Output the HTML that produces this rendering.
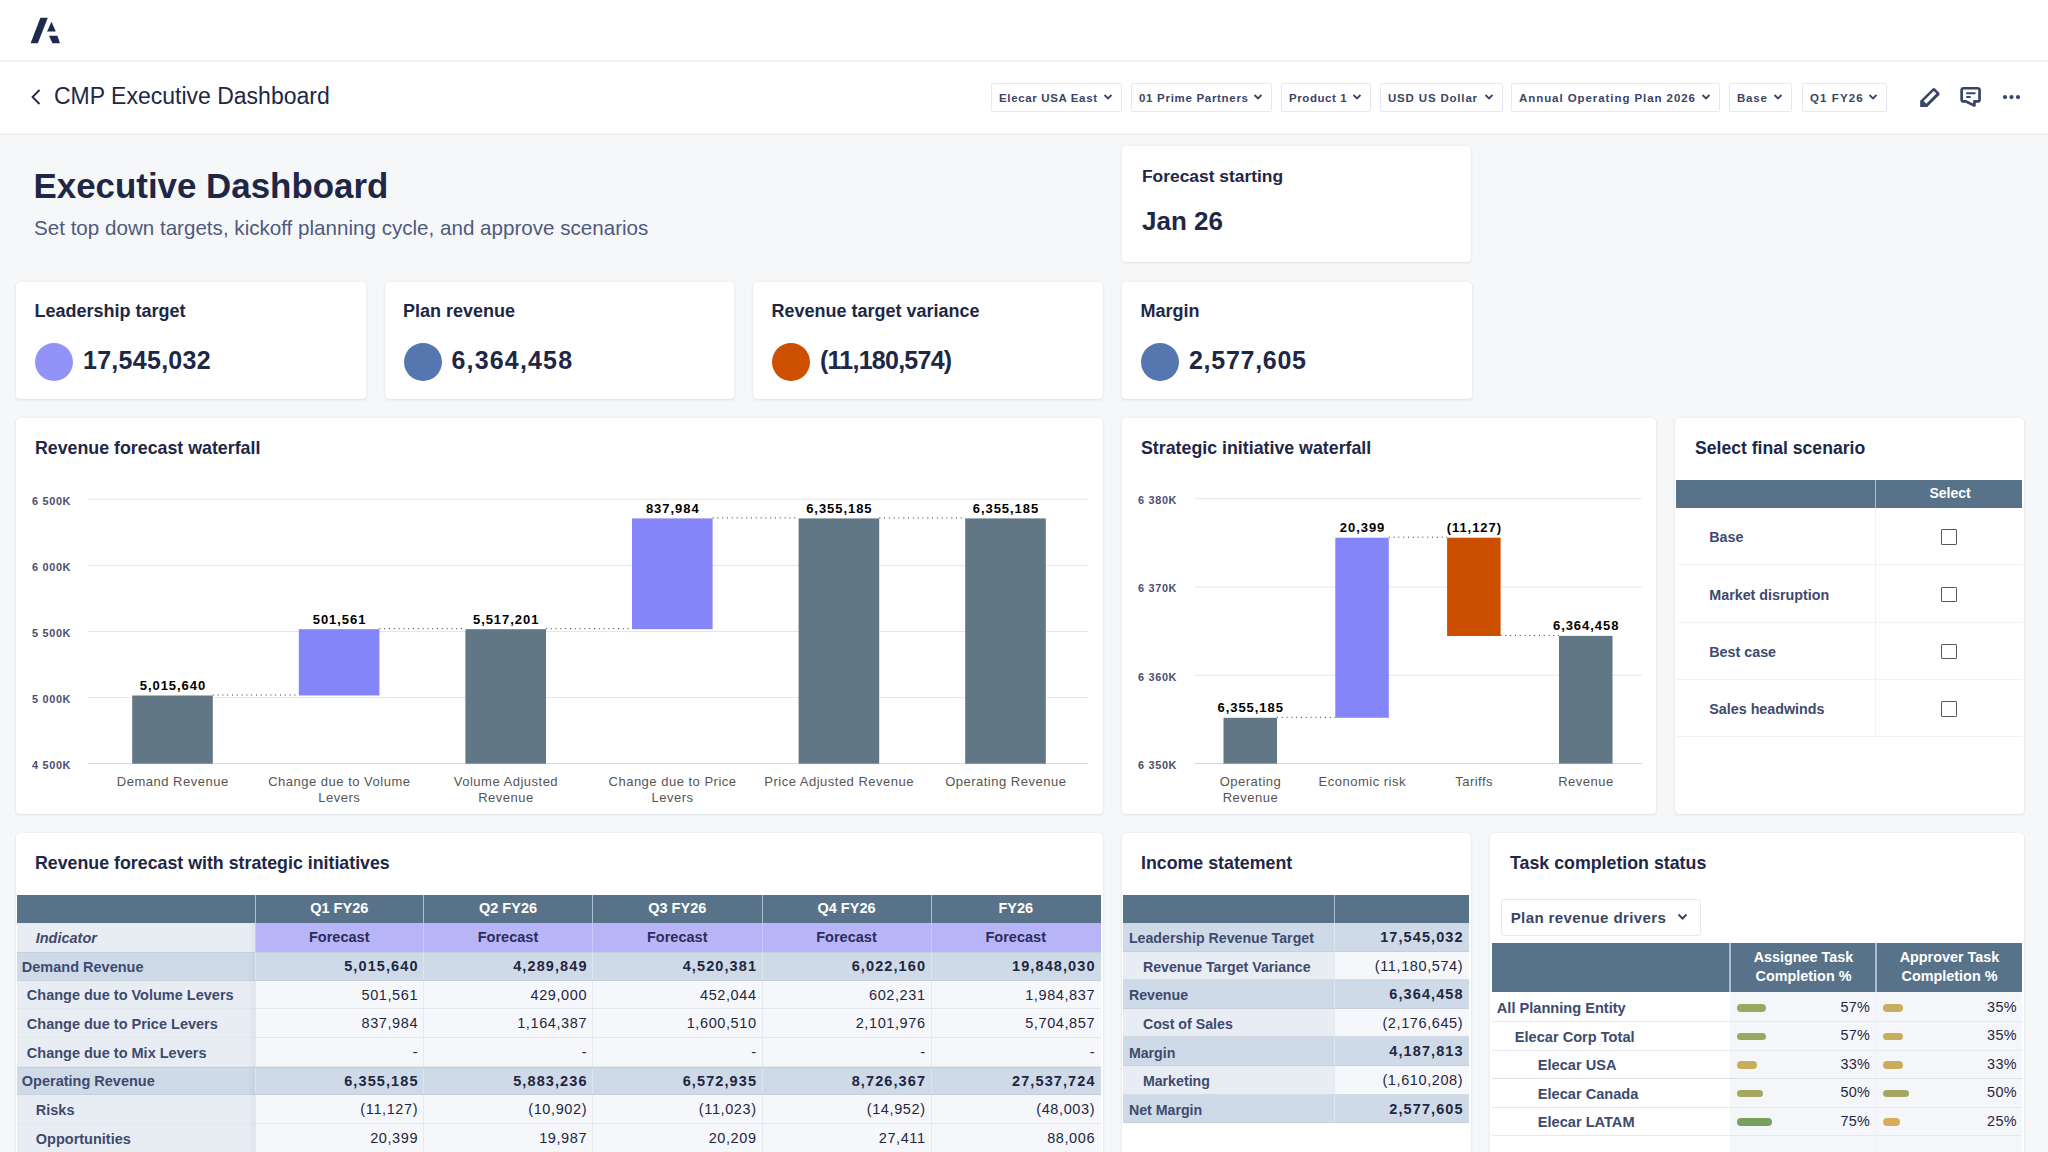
<!DOCTYPE html><html><head><meta charset="utf-8"><style>html,body{margin:0;padding:0;}body{width:2048px;height:1152px;overflow:hidden;position:relative;background:#f6f7f9;font-family:"Liberation Sans",sans-serif;}</style></head><body><div style="position:absolute;left:0px;top:0px;width:2048px;height:60px;background:#ffffff;"></div><div style="position:absolute;left:0px;top:60px;width:2048px;height:2px;background:#f0f1f4;"></div><div style="position:absolute;left:0px;top:62px;width:2048px;height:71px;background:#ffffff;"></div><div style="position:absolute;left:0px;top:133px;width:2048px;height:2px;background:#eef0f3;"></div><svg style="position:absolute;left:0;top:0" width="80" height="60" viewBox="0 0 80 60"><polygon points="40.4,17.8 47.8,17.8 37.8,43.2 30.6,43.2" fill="#1f2a4d"/><polygon points="51.5,21.7 55.8,31.5 47.1,31.5" fill="#1f2a4d"/><polygon points="49.1,35.8 57.4,35.8 60,43.2 52.4,43.2" fill="#1f2a4d"/></svg><svg style="position:absolute;left:28px;top:86px" width="16" height="22" viewBox="0 0 16 22"><polyline points="11.5,4 4.5,11 11.5,18" fill="none" stroke="#1e2746" stroke-width="1.8"/></svg><div style="position:absolute;top:84.73px;font-size:23px;line-height:23px;font-weight:400;color:#1e2746;white-space:nowrap;left:54px;">CMP Executive Dashboard</div><div style="position:absolute;left:991px;top:83px;width:129px;height:27px;border:1px solid #e6e9f2;border-radius:2px;background:#fff"></div><div style="position:absolute;top:92.87px;font-size:11.5px;line-height:11.5px;font-weight:700;color:#3b4566;white-space:nowrap;letter-spacing:0.64px;left:999px;">Elecar USA East</div><svg style="position:absolute;left:1103px;top:93px" width="10" height="8" viewBox="0 0 10 8"><polyline points="1.5,2 5,5.5 8.5,2" fill="none" stroke="#3b4566" stroke-width="1.8"/></svg><div style="position:absolute;left:1131px;top:83px;width:139px;height:27px;border:1px solid #e6e9f2;border-radius:2px;background:#fff"></div><div style="position:absolute;top:92.87px;font-size:11.5px;line-height:11.5px;font-weight:700;color:#3b4566;white-space:nowrap;letter-spacing:0.7px;left:1139px;">01 Prime Partners</div><svg style="position:absolute;left:1253px;top:93px" width="10" height="8" viewBox="0 0 10 8"><polyline points="1.5,2 5,5.5 8.5,2" fill="none" stroke="#3b4566" stroke-width="1.8"/></svg><div style="position:absolute;left:1281px;top:83px;width:88px;height:27px;border:1px solid #e6e9f2;border-radius:2px;background:#fff"></div><div style="position:absolute;top:92.87px;font-size:11.5px;line-height:11.5px;font-weight:700;color:#3b4566;white-space:nowrap;letter-spacing:0.58px;left:1289px;">Product 1</div><svg style="position:absolute;left:1352px;top:93px" width="10" height="8" viewBox="0 0 10 8"><polyline points="1.5,2 5,5.5 8.5,2" fill="none" stroke="#3b4566" stroke-width="1.8"/></svg><div style="position:absolute;left:1380px;top:83px;width:121px;height:27px;border:1px solid #e6e9f2;border-radius:2px;background:#fff"></div><div style="position:absolute;top:92.87px;font-size:11.5px;line-height:11.5px;font-weight:700;color:#3b4566;white-space:nowrap;letter-spacing:0.82px;left:1388px;">USD US Dollar</div><svg style="position:absolute;left:1484px;top:93px" width="10" height="8" viewBox="0 0 10 8"><polyline points="1.5,2 5,5.5 8.5,2" fill="none" stroke="#3b4566" stroke-width="1.8"/></svg><div style="position:absolute;left:1511px;top:83px;width:207px;height:27px;border:1px solid #e6e9f2;border-radius:2px;background:#fff"></div><div style="position:absolute;top:92.87px;font-size:11.5px;line-height:11.5px;font-weight:700;color:#3b4566;white-space:nowrap;letter-spacing:0.93px;left:1519px;">Annual Operating Plan 2026</div><svg style="position:absolute;left:1701px;top:93px" width="10" height="8" viewBox="0 0 10 8"><polyline points="1.5,2 5,5.5 8.5,2" fill="none" stroke="#3b4566" stroke-width="1.8"/></svg><div style="position:absolute;left:1729px;top:83px;width:61px;height:27px;border:1px solid #e6e9f2;border-radius:2px;background:#fff"></div><div style="position:absolute;top:92.87px;font-size:11.5px;line-height:11.5px;font-weight:700;color:#3b4566;white-space:nowrap;letter-spacing:0.8px;left:1737px;">Base</div><svg style="position:absolute;left:1773px;top:93px" width="10" height="8" viewBox="0 0 10 8"><polyline points="1.5,2 5,5.5 8.5,2" fill="none" stroke="#3b4566" stroke-width="1.8"/></svg><div style="position:absolute;left:1802px;top:83px;width:83px;height:27px;border:1px solid #e6e9f2;border-radius:2px;background:#fff"></div><div style="position:absolute;top:92.87px;font-size:11.5px;line-height:11.5px;font-weight:700;color:#3b4566;white-space:nowrap;letter-spacing:1.1px;left:1810px;">Q1 FY26</div><svg style="position:absolute;left:1868px;top:93px" width="10" height="8" viewBox="0 0 10 8"><polyline points="1.5,2 5,5.5 8.5,2" fill="none" stroke="#3b4566" stroke-width="1.8"/></svg><svg style="position:absolute;left:1915px;top:83px" width="110" height="28" viewBox="1915 83 110 28"><path d="M1920.2,100.8 L1932.4,88.8 Q1933.9,87.4 1935.3,88.8 L1939,92.5 Q1940.3,93.9 1939,95.3 L1927.2,107.1 L1920.2,107.1 Z" fill="#39456a"/><polygon points="1923.6,101.0 1933.7,90.9 1936.4,93.6 1926.3,103.7" fill="#ffffff"/><path d="M1963.65,88.25 L1977.55,88.25 Q1979.55,88.25 1979.55,90.25 L1979.55,99.45 Q1979.55,101.45 1977.55,101.45 L1974.4,101.45 L1974.4,105.6 L1966,101.45 L1963.65,101.45 Q1961.65,101.45 1961.65,99.45 L1961.65,90.25 Q1961.65,88.25 1963.65,88.25 Z" fill="none" stroke="#39456a" stroke-width="2.7" stroke-linejoin="round"/><line x1="1967" y1="93.2" x2="1974.7" y2="93.2" stroke="#39456a" stroke-width="2" stroke-linecap="round"/><line x1="1967" y1="97" x2="1969.9" y2="97" stroke="#39456a" stroke-width="1.9" stroke-linecap="round"/><circle cx="2005" cy="97.1" r="2.1" fill="#39456a"/><circle cx="2011.5" cy="97.1" r="2.1" fill="#39456a"/><circle cx="2018" cy="97.1" r="2.1" fill="#39456a"/></svg><div style="position:absolute;top:169.06px;font-size:34.9px;line-height:34.9px;font-weight:700;color:#1e2746;white-space:nowrap;left:33.5px;">Executive Dashboard</div><div style="position:absolute;top:217.56px;font-size:20.6px;line-height:20.6px;font-weight:400;color:#4e5b7d;white-space:nowrap;left:34px;">Set top down targets, kickoff planning cycle, and approve scenarios</div><div style="position:absolute;left:1122px;top:146px;width:349px;height:116px;background:#ffffff;border-radius:4px;box-shadow:0 1px 3px rgba(20,30,60,0.09),0 0 1px rgba(20,30,60,0.12);"></div><div style="position:absolute;top:167.57px;font-size:17.4px;line-height:17.4px;font-weight:700;color:#1e2746;white-space:nowrap;left:1142px;">Forecast starting</div><div style="position:absolute;top:208.49px;font-size:26px;line-height:26px;font-weight:700;color:#1e2746;white-space:nowrap;left:1142px;">Jan 26</div><div style="position:absolute;left:16px;top:282px;width:349.5px;height:117px;background:#ffffff;border-radius:4px;box-shadow:0 1px 3px rgba(20,30,60,0.09),0 0 1px rgba(20,30,60,0.12);"></div><div style="position:absolute;top:302.16px;font-size:18px;line-height:18px;font-weight:700;color:#1e2746;white-space:nowrap;left:34.5px;">Leadership target</div><div style="position:absolute;left:35.3px;top:342.5px;width:38px;height:38px;border-radius:50%;background:#9393f7"></div><div style="position:absolute;top:348.44px;font-size:25px;line-height:25px;font-weight:700;color:#1e2746;white-space:nowrap;letter-spacing:0.28px;left:83px;">17,545,032</div><div style="position:absolute;left:384.5px;top:282px;width:349.5px;height:117px;background:#ffffff;border-radius:4px;box-shadow:0 1px 3px rgba(20,30,60,0.09),0 0 1px rgba(20,30,60,0.12);"></div><div style="position:absolute;top:302.16px;font-size:18px;line-height:18px;font-weight:700;color:#1e2746;white-space:nowrap;left:403.0px;">Plan revenue</div><div style="position:absolute;left:403.8px;top:342.5px;width:38px;height:38px;border-radius:50%;background:#5576ae"></div><div style="position:absolute;top:348.44px;font-size:25px;line-height:25px;font-weight:700;color:#1e2746;white-space:nowrap;letter-spacing:1.17px;left:451.5px;">6,364,458</div><div style="position:absolute;left:753px;top:282px;width:349.5px;height:117px;background:#ffffff;border-radius:4px;box-shadow:0 1px 3px rgba(20,30,60,0.09),0 0 1px rgba(20,30,60,0.12);"></div><div style="position:absolute;top:302.16px;font-size:18px;line-height:18px;font-weight:700;color:#1e2746;white-space:nowrap;left:771.5px;">Revenue target variance</div><div style="position:absolute;left:772.3px;top:342.5px;width:38px;height:38px;border-radius:50%;background:#cc5000"></div><div style="position:absolute;top:348.44px;font-size:25px;line-height:25px;font-weight:700;color:#1e2746;white-space:nowrap;letter-spacing:-0.75px;left:820px;">(11,180,574)</div><div style="position:absolute;left:1122px;top:282px;width:349.5px;height:117px;background:#ffffff;border-radius:4px;box-shadow:0 1px 3px rgba(20,30,60,0.09),0 0 1px rgba(20,30,60,0.12);"></div><div style="position:absolute;top:302.16px;font-size:18px;line-height:18px;font-weight:700;color:#1e2746;white-space:nowrap;left:1140.5px;">Margin</div><div style="position:absolute;left:1141.3px;top:342.5px;width:38px;height:38px;border-radius:50%;background:#5576ae"></div><div style="position:absolute;top:348.44px;font-size:25px;line-height:25px;font-weight:700;color:#1e2746;white-space:nowrap;letter-spacing:0.72px;left:1189px;">2,577,605</div><div style="position:absolute;left:16px;top:418px;width:1087px;height:396px;background:#ffffff;border-radius:4px;box-shadow:0 1px 3px rgba(20,30,60,0.09),0 0 1px rgba(20,30,60,0.12);"></div><div style="position:absolute;left:1122px;top:418px;width:534px;height:396px;background:#ffffff;border-radius:4px;box-shadow:0 1px 3px rgba(20,30,60,0.09),0 0 1px rgba(20,30,60,0.12);"></div><div style="position:absolute;left:1675px;top:418px;width:349px;height:396px;background:#ffffff;border-radius:4px;box-shadow:0 1px 3px rgba(20,30,60,0.09),0 0 1px rgba(20,30,60,0.12);"></div><div style="position:absolute;top:439.63px;font-size:17.8px;line-height:17.8px;font-weight:700;color:#1e2746;white-space:nowrap;left:35px;">Revenue forecast waterfall</div><div style="position:absolute;top:439.63px;font-size:17.8px;line-height:17.8px;font-weight:700;color:#1e2746;white-space:nowrap;left:1141px;">Strategic initiative waterfall</div><div style="position:absolute;top:439.80px;font-size:17.6px;line-height:17.6px;font-weight:700;color:#1e2746;white-space:nowrap;left:1695px;">Select final scenario</div><div style="position:absolute;top:495.57px;font-size:10.9px;line-height:10.9px;font-weight:700;color:#4a4e72;white-space:nowrap;letter-spacing:0.65px;right:1977.50px;margin-right:-0.65px;">6 500K</div><div style="position:absolute;top:561.67px;font-size:10.9px;line-height:10.9px;font-weight:700;color:#4a4e72;white-space:nowrap;letter-spacing:0.65px;right:1977.50px;margin-right:-0.65px;">6 000K</div><div style="position:absolute;top:627.77px;font-size:10.9px;line-height:10.9px;font-weight:700;color:#4a4e72;white-space:nowrap;letter-spacing:0.65px;right:1977.50px;margin-right:-0.65px;">5 500K</div><div style="position:absolute;top:693.87px;font-size:10.9px;line-height:10.9px;font-weight:700;color:#4a4e72;white-space:nowrap;letter-spacing:0.65px;right:1977.50px;margin-right:-0.65px;">5 000K</div><div style="position:absolute;top:759.97px;font-size:10.9px;line-height:10.9px;font-weight:700;color:#4a4e72;white-space:nowrap;letter-spacing:0.65px;right:1977.50px;margin-right:-0.65px;">4 500K</div><div style="position:absolute;top:679.03px;font-size:13px;line-height:13px;font-weight:700;color:#000000;white-space:nowrap;letter-spacing:0.95px;left:-227.50px;width:800px;text-align:center;text-indent:0.95px;">5,015,640</div><div style="position:absolute;top:774.80px;font-size:13px;line-height:13px;font-weight:400;color:#555555;white-space:nowrap;letter-spacing:0.5px;left:-227.50px;width:800px;text-align:center;text-indent:0.5px;">Demand Revenue</div><div style="position:absolute;top:612.72px;font-size:13px;line-height:13px;font-weight:700;color:#000000;white-space:nowrap;letter-spacing:0.95px;left:-60.90px;width:800px;text-align:center;text-indent:0.95px;">501,561</div><div style="position:absolute;top:774.80px;font-size:13px;line-height:13px;font-weight:400;color:#555555;white-space:nowrap;letter-spacing:0.5px;left:-60.90px;width:800px;text-align:center;text-indent:0.5px;">Change due to Volume</div><div style="position:absolute;top:790.80px;font-size:13px;line-height:13px;font-weight:400;color:#555555;white-space:nowrap;letter-spacing:0.5px;left:-60.90px;width:800px;text-align:center;text-indent:0.5px;">Levers</div><div style="position:absolute;top:612.72px;font-size:13px;line-height:13px;font-weight:700;color:#000000;white-space:nowrap;letter-spacing:0.95px;left:105.70px;width:800px;text-align:center;text-indent:0.95px;">5,517,201</div><div style="position:absolute;top:774.80px;font-size:13px;line-height:13px;font-weight:400;color:#555555;white-space:nowrap;letter-spacing:0.5px;left:105.70px;width:800px;text-align:center;text-indent:0.5px;">Volume Adjusted</div><div style="position:absolute;top:790.80px;font-size:13px;line-height:13px;font-weight:400;color:#555555;white-space:nowrap;letter-spacing:0.5px;left:105.70px;width:800px;text-align:center;text-indent:0.5px;">Revenue</div><div style="position:absolute;top:501.94px;font-size:13px;line-height:13px;font-weight:700;color:#000000;white-space:nowrap;letter-spacing:0.95px;left:272.30px;width:800px;text-align:center;text-indent:0.95px;">837,984</div><div style="position:absolute;top:774.80px;font-size:13px;line-height:13px;font-weight:400;color:#555555;white-space:nowrap;letter-spacing:0.5px;left:272.30px;width:800px;text-align:center;text-indent:0.5px;">Change due to Price</div><div style="position:absolute;top:790.80px;font-size:13px;line-height:13px;font-weight:400;color:#555555;white-space:nowrap;letter-spacing:0.5px;left:272.30px;width:800px;text-align:center;text-indent:0.5px;">Levers</div><div style="position:absolute;top:501.94px;font-size:13px;line-height:13px;font-weight:700;color:#000000;white-space:nowrap;letter-spacing:0.95px;left:438.90px;width:800px;text-align:center;text-indent:0.95px;">6,355,185</div><div style="position:absolute;top:774.80px;font-size:13px;line-height:13px;font-weight:400;color:#555555;white-space:nowrap;letter-spacing:0.5px;left:438.90px;width:800px;text-align:center;text-indent:0.5px;">Price Adjusted Revenue</div><div style="position:absolute;top:501.94px;font-size:13px;line-height:13px;font-weight:700;color:#000000;white-space:nowrap;letter-spacing:0.95px;left:605.50px;width:800px;text-align:center;text-indent:0.95px;">6,355,185</div><div style="position:absolute;top:774.80px;font-size:13px;line-height:13px;font-weight:400;color:#555555;white-space:nowrap;letter-spacing:0.5px;left:605.50px;width:800px;text-align:center;text-indent:0.5px;">Operating Revenue</div><div style="position:absolute;top:494.97px;font-size:10.9px;line-height:10.9px;font-weight:700;color:#4a4e72;white-space:nowrap;letter-spacing:0.65px;right:871.50px;margin-right:-0.65px;">6 380K</div><div style="position:absolute;top:583.27px;font-size:10.9px;line-height:10.9px;font-weight:700;color:#4a4e72;white-space:nowrap;letter-spacing:0.65px;right:871.50px;margin-right:-0.65px;">6 370K</div><div style="position:absolute;top:671.57px;font-size:10.9px;line-height:10.9px;font-weight:700;color:#4a4e72;white-space:nowrap;letter-spacing:0.65px;right:871.50px;margin-right:-0.65px;">6 360K</div><div style="position:absolute;top:759.87px;font-size:10.9px;line-height:10.9px;font-weight:700;color:#4a4e72;white-space:nowrap;letter-spacing:0.65px;right:871.50px;margin-right:-0.65px;">6 350K</div><div style="position:absolute;top:701.31px;font-size:13px;line-height:13px;font-weight:700;color:#000000;white-space:nowrap;letter-spacing:0.95px;left:850.21px;width:800px;text-align:center;text-indent:0.95px;">6,355,185</div><div style="position:absolute;top:774.80px;font-size:13px;line-height:13px;font-weight:400;color:#555555;white-space:nowrap;letter-spacing:0.5px;left:850.21px;width:800px;text-align:center;text-indent:0.5px;">Operating</div><div style="position:absolute;top:790.80px;font-size:13px;line-height:13px;font-weight:400;color:#555555;white-space:nowrap;letter-spacing:0.5px;left:850.21px;width:800px;text-align:center;text-indent:0.5px;">Revenue</div><div style="position:absolute;top:521.19px;font-size:13px;line-height:13px;font-weight:700;color:#000000;white-space:nowrap;letter-spacing:0.95px;left:962.05px;width:800px;text-align:center;text-indent:0.95px;">20,399</div><div style="position:absolute;top:774.80px;font-size:13px;line-height:13px;font-weight:400;color:#555555;white-space:nowrap;letter-spacing:0.5px;left:962.05px;width:800px;text-align:center;text-indent:0.5px;">Economic risk</div><div style="position:absolute;top:521.19px;font-size:13px;line-height:13px;font-weight:700;color:#000000;white-space:nowrap;letter-spacing:0.95px;left:1073.88px;width:800px;text-align:center;text-indent:0.95px;">(11,127)</div><div style="position:absolute;top:774.80px;font-size:13px;line-height:13px;font-weight:400;color:#555555;white-space:nowrap;letter-spacing:0.5px;left:1073.88px;width:800px;text-align:center;text-indent:0.5px;">Tariffs</div><div style="position:absolute;top:619.43px;font-size:13px;line-height:13px;font-weight:700;color:#000000;white-space:nowrap;letter-spacing:0.95px;left:1185.70px;width:800px;text-align:center;text-indent:0.95px;">6,364,458</div><div style="position:absolute;top:774.80px;font-size:13px;line-height:13px;font-weight:400;color:#555555;white-space:nowrap;letter-spacing:0.5px;left:1185.70px;width:800px;text-align:center;text-indent:0.5px;">Revenue</div><svg style="position:absolute;left:0;top:0" width="2048" height="1152"><line x1="88" x2="1088" y1="499.3" y2="499.3" stroke="#e6e6e6" stroke-width="1"/><line x1="88" x2="1088" y1="565.4" y2="565.4" stroke="#e6e6e6" stroke-width="1"/><line x1="88" x2="1088" y1="631.5" y2="631.5" stroke="#e6e6e6" stroke-width="1"/><line x1="88" x2="1088" y1="697.6" y2="697.6" stroke="#e6e6e6" stroke-width="1"/><line x1="88" x2="1088" y1="763.7" y2="763.7" stroke="#ccd6eb" stroke-width="1"/><rect x="132.2" y="695.5" width="80.6" height="68.2" fill="#627785"/><line x1="212.8" x2="298.8" y1="695.0" y2="695.0" stroke="#333" stroke-width="1" stroke-dasharray="1,3.8"/><rect x="298.8" y="629.2" width="80.6" height="66.3" fill="#8585fa"/><line x1="379.4" x2="465.4" y1="628.7" y2="628.7" stroke="#333" stroke-width="1" stroke-dasharray="1,3.8"/><rect x="465.4" y="629.2" width="80.6" height="134.5" fill="#627785"/><line x1="546.0" x2="632.0" y1="628.7" y2="628.7" stroke="#333" stroke-width="1" stroke-dasharray="1,3.8"/><rect x="632.0" y="518.4" width="80.6" height="110.8" fill="#8585fa"/><line x1="712.6" x2="798.6" y1="517.9" y2="517.9" stroke="#333" stroke-width="1" stroke-dasharray="1,3.8"/><rect x="798.6" y="518.4" width="80.6" height="245.3" fill="#627785"/><line x1="879.2" x2="965.2" y1="517.9" y2="517.9" stroke="#333" stroke-width="1" stroke-dasharray="1,3.8"/><rect x="965.2" y="518.4" width="80.6" height="245.3" fill="#627785"/><line x1="1195" x2="1642" y1="498.7" y2="498.7" stroke="#e6e6e6" stroke-width="1"/><line x1="1195" x2="1642" y1="587.0" y2="587.0" stroke="#e6e6e6" stroke-width="1"/><line x1="1195" x2="1642" y1="675.3" y2="675.3" stroke="#e6e6e6" stroke-width="1"/><line x1="1195" x2="1642" y1="763.6" y2="763.6" stroke="#ccd6eb" stroke-width="1"/><rect x="1223.5" y="717.8" width="53.5" height="45.8" fill="#627785"/><rect x="1335.3" y="537.7" width="53.5" height="180.1" fill="#8585fa"/><rect x="1447.1" y="537.7" width="53.5" height="98.3" fill="#cc4f00"/><rect x="1559.0" y="635.9" width="53.5" height="127.7" fill="#627785"/><line x1="1277.0" x2="1335.3" y1="717.3" y2="717.3" stroke="#333" stroke-width="1" stroke-dasharray="1,3.8"/><line x1="1388.8" x2="1447.1" y1="537.2" y2="537.2" stroke="#333" stroke-width="1" stroke-dasharray="1,3.8"/><line x1="1500.6" x2="1559.0" y1="635.4" y2="635.4" stroke="#333" stroke-width="1" stroke-dasharray="1,3.8"/></svg><div style="position:absolute;left:1676px;top:480px;width:346px;height:28px;background:#587389;"></div><div style="position:absolute;left:1874.5px;top:480px;width:1.5px;height:28px;background:#a9bfd1;"></div><div style="position:absolute;top:485.75px;font-size:14px;line-height:14px;font-weight:700;color:#ffffff;white-space:nowrap;left:1550.00px;width:800px;text-align:center;">Select</div><div style="position:absolute;left:1676px;top:564.3px;width:346px;height:1px;background:#f0f2f6;"></div><div style="position:absolute;left:1874.5px;top:508.0px;width:1px;height:57.3px;background:#f0f2f6;"></div><div style="position:absolute;top:530.40px;font-size:14.3px;line-height:14.3px;font-weight:700;color:#3e4a6e;white-space:nowrap;left:1709.3px;">Base</div><div style="position:absolute;left:1941.3px;top:529.2px;width:13.5px;height:13.5px;border:1.3px solid #595959;border-radius:1px;background:#fff"></div><div style="position:absolute;left:1676px;top:621.5999999999999px;width:346px;height:1px;background:#f0f2f6;"></div><div style="position:absolute;left:1874.5px;top:565.3px;width:1px;height:57.3px;background:#f0f2f6;"></div><div style="position:absolute;top:587.70px;font-size:14.3px;line-height:14.3px;font-weight:700;color:#3e4a6e;white-space:nowrap;left:1709.3px;">Market disruption</div><div style="position:absolute;left:1941.3px;top:586.5px;width:13.5px;height:13.5px;border:1.3px solid #595959;border-radius:1px;background:#fff"></div><div style="position:absolute;left:1676px;top:678.9px;width:346px;height:1px;background:#f0f2f6;"></div><div style="position:absolute;left:1874.5px;top:622.6px;width:1px;height:57.3px;background:#f0f2f6;"></div><div style="position:absolute;top:645.00px;font-size:14.3px;line-height:14.3px;font-weight:700;color:#3e4a6e;white-space:nowrap;left:1709.3px;">Best case</div><div style="position:absolute;left:1941.3px;top:643.8px;width:13.5px;height:13.5px;border:1.3px solid #595959;border-radius:1px;background:#fff"></div><div style="position:absolute;left:1676px;top:736.1999999999999px;width:346px;height:1px;background:#f0f2f6;"></div><div style="position:absolute;left:1874.5px;top:679.9px;width:1px;height:57.3px;background:#f0f2f6;"></div><div style="position:absolute;top:702.30px;font-size:14.3px;line-height:14.3px;font-weight:700;color:#3e4a6e;white-space:nowrap;left:1709.3px;">Sales headwinds</div><div style="position:absolute;left:1941.3px;top:701.1px;width:13.5px;height:13.5px;border:1.3px solid #595959;border-radius:1px;background:#fff"></div><div style="position:absolute;left:16px;top:833px;width:1087px;height:330px;background:#ffffff;border-radius:4px;box-shadow:0 1px 3px rgba(20,30,60,0.09),0 0 1px rgba(20,30,60,0.12);"></div><div style="position:absolute;left:1122px;top:833px;width:349px;height:330px;background:#ffffff;border-radius:4px;box-shadow:0 1px 3px rgba(20,30,60,0.09),0 0 1px rgba(20,30,60,0.12);"></div><div style="position:absolute;left:1490px;top:833px;width:534px;height:330px;background:#ffffff;border-radius:4px;box-shadow:0 1px 3px rgba(20,30,60,0.09),0 0 1px rgba(20,30,60,0.12);"></div><div style="position:absolute;top:855.43px;font-size:17.8px;line-height:17.8px;font-weight:700;color:#1e2746;white-space:nowrap;left:35px;">Revenue forecast with strategic initiatives</div><div style="position:absolute;top:855.43px;font-size:17.8px;line-height:17.8px;font-weight:700;color:#1e2746;white-space:nowrap;left:1141px;">Income statement</div><div style="position:absolute;top:855.43px;font-size:17.8px;line-height:17.8px;font-weight:700;color:#1e2746;white-space:nowrap;left:1510px;">Task completion status</div><div style="position:absolute;left:17px;top:895px;width:1083.5px;height:28px;background:#587389;"></div><div style="position:absolute;left:254.5px;top:895px;width:1.2px;height:28px;background:#a9bfd1;"></div><div style="position:absolute;left:423.0px;top:895px;width:1.2px;height:28px;background:#a9bfd1;"></div><div style="position:absolute;left:592.0px;top:895px;width:1.2px;height:28px;background:#a9bfd1;"></div><div style="position:absolute;left:761.5px;top:895px;width:1.2px;height:28px;background:#a9bfd1;"></div><div style="position:absolute;left:930.5px;top:895px;width:1.2px;height:28px;background:#a9bfd1;"></div><div style="position:absolute;top:901.03px;font-size:14.5px;line-height:14.5px;font-weight:700;color:#ffffff;white-space:nowrap;left:-60.75px;width:800px;text-align:center;">Q1 FY26</div><div style="position:absolute;top:901.03px;font-size:14.5px;line-height:14.5px;font-weight:700;color:#ffffff;white-space:nowrap;left:108.00px;width:800px;text-align:center;">Q2 FY26</div><div style="position:absolute;top:901.03px;font-size:14.5px;line-height:14.5px;font-weight:700;color:#ffffff;white-space:nowrap;left:277.25px;width:800px;text-align:center;">Q3 FY26</div><div style="position:absolute;top:901.03px;font-size:14.5px;line-height:14.5px;font-weight:700;color:#ffffff;white-space:nowrap;left:446.50px;width:800px;text-align:center;">Q4 FY26</div><div style="position:absolute;top:901.03px;font-size:14.5px;line-height:14.5px;font-weight:700;color:#ffffff;white-space:nowrap;left:615.75px;width:800px;text-align:center;">FY26</div><div style="position:absolute;left:17px;top:923px;width:238px;height:29px;background:#e8edf4;"></div><div style="position:absolute;left:255.5px;top:923px;width:845px;height:29px;background:#b7b5f7;"></div><div style="position:absolute;left:254.5px;top:923px;width:1px;height:29px;background:#c9c8fa;"></div><div style="position:absolute;left:423.0px;top:923px;width:1px;height:29px;background:#c9c8fa;"></div><div style="position:absolute;left:592.0px;top:923px;width:1px;height:29px;background:#c9c8fa;"></div><div style="position:absolute;left:761.5px;top:923px;width:1px;height:29px;background:#c9c8fa;"></div><div style="position:absolute;left:930.5px;top:923px;width:1px;height:29px;background:#c9c8fa;"></div><div style="position:absolute;top:931.23px;font-size:14.5px;line-height:14.5px;font-weight:700;color:#3e4a6e;white-space:nowrap;font-style:italic;left:35.7px;">Indicator</div><div style="position:absolute;top:929.73px;font-size:14.5px;line-height:14.5px;font-weight:700;color:#2b2d5c;white-space:nowrap;left:-60.75px;width:800px;text-align:center;">Forecast</div><div style="position:absolute;top:929.73px;font-size:14.5px;line-height:14.5px;font-weight:700;color:#2b2d5c;white-space:nowrap;left:108.00px;width:800px;text-align:center;">Forecast</div><div style="position:absolute;top:929.73px;font-size:14.5px;line-height:14.5px;font-weight:700;color:#2b2d5c;white-space:nowrap;left:277.25px;width:800px;text-align:center;">Forecast</div><div style="position:absolute;top:929.73px;font-size:14.5px;line-height:14.5px;font-weight:700;color:#2b2d5c;white-space:nowrap;left:446.50px;width:800px;text-align:center;">Forecast</div><div style="position:absolute;top:929.73px;font-size:14.5px;line-height:14.5px;font-weight:700;color:#2b2d5c;white-space:nowrap;left:615.75px;width:800px;text-align:center;">Forecast</div><div style="position:absolute;left:17px;top:952.0px;width:1083.5px;height:28.65px;background:#cfdae8;"></div><div style="position:absolute;left:254.5px;top:952.0px;width:1px;height:28.65px;background:#dde5ef;"></div><div style="position:absolute;left:423.0px;top:952.0px;width:1px;height:28.65px;background:#dde5ef;"></div><div style="position:absolute;left:592.0px;top:952.0px;width:1px;height:28.65px;background:#dde5ef;"></div><div style="position:absolute;left:761.5px;top:952.0px;width:1px;height:28.65px;background:#dde5ef;"></div><div style="position:absolute;left:930.5px;top:952.0px;width:1px;height:28.65px;background:#dde5ef;"></div><div style="position:absolute;left:17px;top:952.0px;width:1083.5px;height:1px;background:#c9d0dc;"></div><div style="position:absolute;left:17px;top:979.65px;width:1083.5px;height:1px;background:#c9d0dc;"></div><div style="position:absolute;top:959.73px;font-size:14.5px;line-height:14.5px;font-weight:700;color:#3e4a6e;white-space:nowrap;left:21.8px;">Demand Revenue</div><div style="position:absolute;top:959.03px;font-size:14.5px;line-height:14.5px;font-weight:700;color:#1f2640;white-space:nowrap;letter-spacing:1.1px;right:1630.50px;margin-right:-1.1px;">5,015,640</div><div style="position:absolute;top:959.03px;font-size:14.5px;line-height:14.5px;font-weight:700;color:#1f2640;white-space:nowrap;letter-spacing:1.1px;right:1461.50px;margin-right:-1.1px;">4,289,849</div><div style="position:absolute;top:959.03px;font-size:14.5px;line-height:14.5px;font-weight:700;color:#1f2640;white-space:nowrap;letter-spacing:1.1px;right:1292.00px;margin-right:-1.1px;">4,520,381</div><div style="position:absolute;top:959.03px;font-size:14.5px;line-height:14.5px;font-weight:700;color:#1f2640;white-space:nowrap;letter-spacing:1.1px;right:1123.00px;margin-right:-1.1px;">6,022,160</div><div style="position:absolute;top:959.03px;font-size:14.5px;line-height:14.5px;font-weight:700;color:#1f2640;white-space:nowrap;letter-spacing:1.1px;right:953.50px;margin-right:-1.1px;">19,848,030</div><div style="position:absolute;left:17px;top:980.65px;width:238px;height:28.65px;background:#e8edf4;"></div><div style="position:absolute;left:255.5px;top:980.65px;width:845px;height:28.65px;background:#f6f7fb;"></div><div style="position:absolute;left:254.5px;top:980.65px;width:1px;height:28.65px;background:#e4e8ef;"></div><div style="position:absolute;left:423.0px;top:980.65px;width:1px;height:28.65px;background:#e4e8ef;"></div><div style="position:absolute;left:592.0px;top:980.65px;width:1px;height:28.65px;background:#e4e8ef;"></div><div style="position:absolute;left:761.5px;top:980.65px;width:1px;height:28.65px;background:#e4e8ef;"></div><div style="position:absolute;left:930.5px;top:980.65px;width:1px;height:28.65px;background:#e4e8ef;"></div><div style="position:absolute;left:17px;top:1008.3px;width:1083.5px;height:1px;background:#e2e6ed;"></div><div style="position:absolute;top:988.38px;font-size:14.5px;line-height:14.5px;font-weight:700;color:#3e4a6e;white-space:nowrap;left:26.8px;">Change due to Volume Levers</div><div style="position:absolute;top:987.68px;font-size:14.5px;line-height:14.5px;font-weight:400;color:#1f2640;white-space:nowrap;letter-spacing:0.6px;right:1630.50px;margin-right:-0.6px;">501,561</div><div style="position:absolute;top:987.68px;font-size:14.5px;line-height:14.5px;font-weight:400;color:#1f2640;white-space:nowrap;letter-spacing:0.6px;right:1461.50px;margin-right:-0.6px;">429,000</div><div style="position:absolute;top:987.68px;font-size:14.5px;line-height:14.5px;font-weight:400;color:#1f2640;white-space:nowrap;letter-spacing:0.6px;right:1292.00px;margin-right:-0.6px;">452,044</div><div style="position:absolute;top:987.68px;font-size:14.5px;line-height:14.5px;font-weight:400;color:#1f2640;white-space:nowrap;letter-spacing:0.6px;right:1123.00px;margin-right:-0.6px;">602,231</div><div style="position:absolute;top:987.68px;font-size:14.5px;line-height:14.5px;font-weight:400;color:#1f2640;white-space:nowrap;letter-spacing:0.6px;right:953.50px;margin-right:-0.6px;">1,984,837</div><div style="position:absolute;left:17px;top:1009.3px;width:238px;height:28.65px;background:#e8edf4;"></div><div style="position:absolute;left:255.5px;top:1009.3px;width:845px;height:28.65px;background:#f6f7fb;"></div><div style="position:absolute;left:254.5px;top:1009.3px;width:1px;height:28.65px;background:#e4e8ef;"></div><div style="position:absolute;left:423.0px;top:1009.3px;width:1px;height:28.65px;background:#e4e8ef;"></div><div style="position:absolute;left:592.0px;top:1009.3px;width:1px;height:28.65px;background:#e4e8ef;"></div><div style="position:absolute;left:761.5px;top:1009.3px;width:1px;height:28.65px;background:#e4e8ef;"></div><div style="position:absolute;left:930.5px;top:1009.3px;width:1px;height:28.65px;background:#e4e8ef;"></div><div style="position:absolute;left:17px;top:1036.95px;width:1083.5px;height:1px;background:#e2e6ed;"></div><div style="position:absolute;top:1017.03px;font-size:14.5px;line-height:14.5px;font-weight:700;color:#3e4a6e;white-space:nowrap;left:26.8px;">Change due to Price Levers</div><div style="position:absolute;top:1016.33px;font-size:14.5px;line-height:14.5px;font-weight:400;color:#1f2640;white-space:nowrap;letter-spacing:0.6px;right:1630.50px;margin-right:-0.6px;">837,984</div><div style="position:absolute;top:1016.33px;font-size:14.5px;line-height:14.5px;font-weight:400;color:#1f2640;white-space:nowrap;letter-spacing:0.6px;right:1461.50px;margin-right:-0.6px;">1,164,387</div><div style="position:absolute;top:1016.33px;font-size:14.5px;line-height:14.5px;font-weight:400;color:#1f2640;white-space:nowrap;letter-spacing:0.6px;right:1292.00px;margin-right:-0.6px;">1,600,510</div><div style="position:absolute;top:1016.33px;font-size:14.5px;line-height:14.5px;font-weight:400;color:#1f2640;white-space:nowrap;letter-spacing:0.6px;right:1123.00px;margin-right:-0.6px;">2,101,976</div><div style="position:absolute;top:1016.33px;font-size:14.5px;line-height:14.5px;font-weight:400;color:#1f2640;white-space:nowrap;letter-spacing:0.6px;right:953.50px;margin-right:-0.6px;">5,704,857</div><div style="position:absolute;left:17px;top:1037.95px;width:238px;height:28.65px;background:#e8edf4;"></div><div style="position:absolute;left:255.5px;top:1037.95px;width:845px;height:28.65px;background:#f6f7fb;"></div><div style="position:absolute;left:254.5px;top:1037.95px;width:1px;height:28.65px;background:#e4e8ef;"></div><div style="position:absolute;left:423.0px;top:1037.95px;width:1px;height:28.65px;background:#e4e8ef;"></div><div style="position:absolute;left:592.0px;top:1037.95px;width:1px;height:28.65px;background:#e4e8ef;"></div><div style="position:absolute;left:761.5px;top:1037.95px;width:1px;height:28.65px;background:#e4e8ef;"></div><div style="position:absolute;left:930.5px;top:1037.95px;width:1px;height:28.65px;background:#e4e8ef;"></div><div style="position:absolute;left:17px;top:1065.6000000000001px;width:1083.5px;height:1px;background:#e2e6ed;"></div><div style="position:absolute;top:1045.68px;font-size:14.5px;line-height:14.5px;font-weight:700;color:#3e4a6e;white-space:nowrap;left:26.8px;">Change due to Mix Levers</div><div style="position:absolute;top:1044.98px;font-size:14.5px;line-height:14.5px;font-weight:400;color:#1f2640;white-space:nowrap;letter-spacing:0.6px;right:1630.50px;margin-right:-0.6px;">-</div><div style="position:absolute;top:1044.98px;font-size:14.5px;line-height:14.5px;font-weight:400;color:#1f2640;white-space:nowrap;letter-spacing:0.6px;right:1461.50px;margin-right:-0.6px;">-</div><div style="position:absolute;top:1044.98px;font-size:14.5px;line-height:14.5px;font-weight:400;color:#1f2640;white-space:nowrap;letter-spacing:0.6px;right:1292.00px;margin-right:-0.6px;">-</div><div style="position:absolute;top:1044.98px;font-size:14.5px;line-height:14.5px;font-weight:400;color:#1f2640;white-space:nowrap;letter-spacing:0.6px;right:1123.00px;margin-right:-0.6px;">-</div><div style="position:absolute;top:1044.98px;font-size:14.5px;line-height:14.5px;font-weight:400;color:#1f2640;white-space:nowrap;letter-spacing:0.6px;right:953.50px;margin-right:-0.6px;">-</div><div style="position:absolute;left:17px;top:1066.6px;width:1083.5px;height:28.65px;background:#cfdae8;"></div><div style="position:absolute;left:254.5px;top:1066.6px;width:1px;height:28.65px;background:#dde5ef;"></div><div style="position:absolute;left:423.0px;top:1066.6px;width:1px;height:28.65px;background:#dde5ef;"></div><div style="position:absolute;left:592.0px;top:1066.6px;width:1px;height:28.65px;background:#dde5ef;"></div><div style="position:absolute;left:761.5px;top:1066.6px;width:1px;height:28.65px;background:#dde5ef;"></div><div style="position:absolute;left:930.5px;top:1066.6px;width:1px;height:28.65px;background:#dde5ef;"></div><div style="position:absolute;left:17px;top:1066.6px;width:1083.5px;height:1px;background:#c9d0dc;"></div><div style="position:absolute;left:17px;top:1094.25px;width:1083.5px;height:1px;background:#c9d0dc;"></div><div style="position:absolute;top:1074.33px;font-size:14.5px;line-height:14.5px;font-weight:700;color:#3e4a6e;white-space:nowrap;left:21.8px;">Operating Revenue</div><div style="position:absolute;top:1073.63px;font-size:14.5px;line-height:14.5px;font-weight:700;color:#1f2640;white-space:nowrap;letter-spacing:1.1px;right:1630.50px;margin-right:-1.1px;">6,355,185</div><div style="position:absolute;top:1073.63px;font-size:14.5px;line-height:14.5px;font-weight:700;color:#1f2640;white-space:nowrap;letter-spacing:1.1px;right:1461.50px;margin-right:-1.1px;">5,883,236</div><div style="position:absolute;top:1073.63px;font-size:14.5px;line-height:14.5px;font-weight:700;color:#1f2640;white-space:nowrap;letter-spacing:1.1px;right:1292.00px;margin-right:-1.1px;">6,572,935</div><div style="position:absolute;top:1073.63px;font-size:14.5px;line-height:14.5px;font-weight:700;color:#1f2640;white-space:nowrap;letter-spacing:1.1px;right:1123.00px;margin-right:-1.1px;">8,726,367</div><div style="position:absolute;top:1073.63px;font-size:14.5px;line-height:14.5px;font-weight:700;color:#1f2640;white-space:nowrap;letter-spacing:1.1px;right:953.50px;margin-right:-1.1px;">27,537,724</div><div style="position:absolute;left:17px;top:1095.25px;width:238px;height:28.65px;background:#e8edf4;"></div><div style="position:absolute;left:255.5px;top:1095.25px;width:845px;height:28.65px;background:#f6f7fb;"></div><div style="position:absolute;left:254.5px;top:1095.25px;width:1px;height:28.65px;background:#e4e8ef;"></div><div style="position:absolute;left:423.0px;top:1095.25px;width:1px;height:28.65px;background:#e4e8ef;"></div><div style="position:absolute;left:592.0px;top:1095.25px;width:1px;height:28.65px;background:#e4e8ef;"></div><div style="position:absolute;left:761.5px;top:1095.25px;width:1px;height:28.65px;background:#e4e8ef;"></div><div style="position:absolute;left:930.5px;top:1095.25px;width:1px;height:28.65px;background:#e4e8ef;"></div><div style="position:absolute;left:17px;top:1122.9px;width:1083.5px;height:1px;background:#e2e6ed;"></div><div style="position:absolute;top:1102.98px;font-size:14.5px;line-height:14.5px;font-weight:700;color:#3e4a6e;white-space:nowrap;left:35.8px;">Risks</div><div style="position:absolute;top:1102.28px;font-size:14.5px;line-height:14.5px;font-weight:400;color:#1f2640;white-space:nowrap;letter-spacing:0.6px;right:1630.50px;margin-right:-0.6px;">(11,127)</div><div style="position:absolute;top:1102.28px;font-size:14.5px;line-height:14.5px;font-weight:400;color:#1f2640;white-space:nowrap;letter-spacing:0.6px;right:1461.50px;margin-right:-0.6px;">(10,902)</div><div style="position:absolute;top:1102.28px;font-size:14.5px;line-height:14.5px;font-weight:400;color:#1f2640;white-space:nowrap;letter-spacing:0.6px;right:1292.00px;margin-right:-0.6px;">(11,023)</div><div style="position:absolute;top:1102.28px;font-size:14.5px;line-height:14.5px;font-weight:400;color:#1f2640;white-space:nowrap;letter-spacing:0.6px;right:1123.00px;margin-right:-0.6px;">(14,952)</div><div style="position:absolute;top:1102.28px;font-size:14.5px;line-height:14.5px;font-weight:400;color:#1f2640;white-space:nowrap;letter-spacing:0.6px;right:953.50px;margin-right:-0.6px;">(48,003)</div><div style="position:absolute;left:17px;top:1123.9px;width:238px;height:28.65px;background:#e8edf4;"></div><div style="position:absolute;left:255.5px;top:1123.9px;width:845px;height:28.65px;background:#f6f7fb;"></div><div style="position:absolute;left:254.5px;top:1123.9px;width:1px;height:28.65px;background:#e4e8ef;"></div><div style="position:absolute;left:423.0px;top:1123.9px;width:1px;height:28.65px;background:#e4e8ef;"></div><div style="position:absolute;left:592.0px;top:1123.9px;width:1px;height:28.65px;background:#e4e8ef;"></div><div style="position:absolute;left:761.5px;top:1123.9px;width:1px;height:28.65px;background:#e4e8ef;"></div><div style="position:absolute;left:930.5px;top:1123.9px;width:1px;height:28.65px;background:#e4e8ef;"></div><div style="position:absolute;left:17px;top:1151.5500000000002px;width:1083.5px;height:1px;background:#e2e6ed;"></div><div style="position:absolute;top:1131.63px;font-size:14.5px;line-height:14.5px;font-weight:700;color:#3e4a6e;white-space:nowrap;left:35.8px;">Opportunities</div><div style="position:absolute;top:1130.93px;font-size:14.5px;line-height:14.5px;font-weight:400;color:#1f2640;white-space:nowrap;letter-spacing:0.6px;right:1630.50px;margin-right:-0.6px;">20,399</div><div style="position:absolute;top:1130.93px;font-size:14.5px;line-height:14.5px;font-weight:400;color:#1f2640;white-space:nowrap;letter-spacing:0.6px;right:1461.50px;margin-right:-0.6px;">19,987</div><div style="position:absolute;top:1130.93px;font-size:14.5px;line-height:14.5px;font-weight:400;color:#1f2640;white-space:nowrap;letter-spacing:0.6px;right:1292.00px;margin-right:-0.6px;">20,209</div><div style="position:absolute;top:1130.93px;font-size:14.5px;line-height:14.5px;font-weight:400;color:#1f2640;white-space:nowrap;letter-spacing:0.6px;right:1123.00px;margin-right:-0.6px;">27,411</div><div style="position:absolute;top:1130.93px;font-size:14.5px;line-height:14.5px;font-weight:400;color:#1f2640;white-space:nowrap;letter-spacing:0.6px;right:953.50px;margin-right:-0.6px;">88,006</div><div style="position:absolute;left:248px;top:923px;width:7px;height:229px;background:linear-gradient(to right,rgba(40,55,90,0),rgba(40,55,90,0.05))"></div><div style="position:absolute;left:1123px;top:895px;width:346px;height:28px;background:#587389;"></div><div style="position:absolute;left:1333.5px;top:895px;width:1.2px;height:28px;background:#a9bfd1;"></div><div style="position:absolute;left:1123px;top:923.0px;width:346px;height:28.6px;background:#cfdae8;"></div><div style="position:absolute;left:1333.5px;top:923.0px;width:1px;height:28.6px;background:#dde5ef;"></div><div style="position:absolute;left:1123px;top:950.6px;width:346px;height:1px;background:#c9d0dc;"></div><div style="position:absolute;top:931.28px;font-size:14.2px;line-height:14.2px;font-weight:700;color:#3e4a6e;white-space:nowrap;left:1128.9px;">Leadership Revenue Target</div><div style="position:absolute;top:930.03px;font-size:14.5px;line-height:14.5px;font-weight:700;color:#1f2640;white-space:nowrap;letter-spacing:1.1px;right:585.40px;margin-right:-1.1px;">17,545,032</div><div style="position:absolute;left:1123px;top:951.6px;width:211px;height:28.6px;background:#e8edf4;"></div><div style="position:absolute;left:1334px;top:951.6px;width:135px;height:28.6px;background:#f6f7fb;"></div><div style="position:absolute;left:1333.5px;top:951.6px;width:1px;height:28.6px;background:#e4e8ef;"></div><div style="position:absolute;left:1123px;top:979.2px;width:346px;height:1px;background:#d5dbe5;"></div><div style="position:absolute;top:959.88px;font-size:14.2px;line-height:14.2px;font-weight:700;color:#3e4a6e;white-space:nowrap;left:1142.9px;">Revenue Target Variance</div><div style="position:absolute;top:958.63px;font-size:14.5px;line-height:14.5px;font-weight:400;color:#1f2640;white-space:nowrap;letter-spacing:0.6px;right:585.40px;margin-right:-0.6px;">(11,180,574)</div><div style="position:absolute;left:1123px;top:980.2px;width:346px;height:28.6px;background:#cfdae8;"></div><div style="position:absolute;left:1333.5px;top:980.2px;width:1px;height:28.6px;background:#dde5ef;"></div><div style="position:absolute;left:1123px;top:1007.8000000000001px;width:346px;height:1px;background:#c9d0dc;"></div><div style="position:absolute;top:988.48px;font-size:14.2px;line-height:14.2px;font-weight:700;color:#3e4a6e;white-space:nowrap;left:1128.9px;">Revenue</div><div style="position:absolute;top:987.23px;font-size:14.5px;line-height:14.5px;font-weight:700;color:#1f2640;white-space:nowrap;letter-spacing:1.1px;right:585.40px;margin-right:-1.1px;">6,364,458</div><div style="position:absolute;left:1123px;top:1008.8px;width:211px;height:28.6px;background:#e8edf4;"></div><div style="position:absolute;left:1334px;top:1008.8px;width:135px;height:28.6px;background:#f6f7fb;"></div><div style="position:absolute;left:1333.5px;top:1008.8px;width:1px;height:28.6px;background:#e4e8ef;"></div><div style="position:absolute;left:1123px;top:1036.3999999999999px;width:346px;height:1px;background:#d5dbe5;"></div><div style="position:absolute;top:1017.08px;font-size:14.2px;line-height:14.2px;font-weight:700;color:#3e4a6e;white-space:nowrap;left:1142.9px;">Cost of Sales</div><div style="position:absolute;top:1015.83px;font-size:14.5px;line-height:14.5px;font-weight:400;color:#1f2640;white-space:nowrap;letter-spacing:0.6px;right:585.40px;margin-right:-0.6px;">(2,176,645)</div><div style="position:absolute;left:1123px;top:1037.4px;width:346px;height:28.6px;background:#cfdae8;"></div><div style="position:absolute;left:1333.5px;top:1037.4px;width:1px;height:28.6px;background:#dde5ef;"></div><div style="position:absolute;left:1123px;top:1065.0px;width:346px;height:1px;background:#c9d0dc;"></div><div style="position:absolute;top:1045.68px;font-size:14.2px;line-height:14.2px;font-weight:700;color:#3e4a6e;white-space:nowrap;left:1128.9px;">Margin</div><div style="position:absolute;top:1044.43px;font-size:14.5px;line-height:14.5px;font-weight:700;color:#1f2640;white-space:nowrap;letter-spacing:1.1px;right:585.40px;margin-right:-1.1px;">4,187,813</div><div style="position:absolute;left:1123px;top:1066.0px;width:211px;height:28.6px;background:#e8edf4;"></div><div style="position:absolute;left:1334px;top:1066.0px;width:135px;height:28.6px;background:#f6f7fb;"></div><div style="position:absolute;left:1333.5px;top:1066.0px;width:1px;height:28.6px;background:#e4e8ef;"></div><div style="position:absolute;left:1123px;top:1093.6px;width:346px;height:1px;background:#d5dbe5;"></div><div style="position:absolute;top:1074.28px;font-size:14.2px;line-height:14.2px;font-weight:700;color:#3e4a6e;white-space:nowrap;left:1142.9px;">Marketing</div><div style="position:absolute;top:1073.03px;font-size:14.5px;line-height:14.5px;font-weight:400;color:#1f2640;white-space:nowrap;letter-spacing:0.6px;right:585.40px;margin-right:-0.6px;">(1,610,208)</div><div style="position:absolute;left:1123px;top:1094.6px;width:346px;height:28.6px;background:#cfdae8;"></div><div style="position:absolute;left:1333.5px;top:1094.6px;width:1px;height:28.6px;background:#dde5ef;"></div><div style="position:absolute;left:1123px;top:1122.1999999999998px;width:346px;height:1px;background:#c9d0dc;"></div><div style="position:absolute;top:1102.88px;font-size:14.2px;line-height:14.2px;font-weight:700;color:#3e4a6e;white-space:nowrap;left:1128.9px;">Net Margin</div><div style="position:absolute;top:1101.63px;font-size:14.5px;line-height:14.5px;font-weight:700;color:#1f2640;white-space:nowrap;letter-spacing:1.1px;right:585.40px;margin-right:-1.1px;">2,577,605</div><div style="position:absolute;left:1501px;top:899px;width:198px;height:35px;border:1px solid #e6e9f2;border-radius:3px;background:#fff"></div><div style="position:absolute;top:909.52px;font-size:15.1px;line-height:15.1px;font-weight:700;color:#3b4566;white-space:nowrap;letter-spacing:0.35px;left:1510.7px;">Plan revenue drivers</div><svg style="position:absolute;left:1677px;top:912px" width="12" height="10" viewBox="0 0 12 10"><polyline points="1.5,2.5 5.5,6.5 9.5,2.5" fill="none" stroke="#3b4566" stroke-width="2"/></svg><div style="position:absolute;left:1492px;top:943px;width:530px;height:49px;background:#587389;"></div><div style="position:absolute;left:1729.2px;top:943px;width:1.5px;height:49px;background:#a9bfd1;"></div><div style="position:absolute;left:1875.2px;top:943px;width:1.5px;height:49px;background:#a9bfd1;"></div><div style="position:absolute;top:950.01px;font-size:14.4px;line-height:14.4px;font-weight:700;color:#ffffff;white-space:nowrap;left:1403.50px;width:800px;text-align:center;">Assignee Task</div><div style="position:absolute;top:969.31px;font-size:14.4px;line-height:14.4px;font-weight:700;color:#ffffff;white-space:nowrap;left:1403.50px;width:800px;text-align:center;">Completion %</div><div style="position:absolute;top:950.01px;font-size:14.4px;line-height:14.4px;font-weight:700;color:#ffffff;white-space:nowrap;left:1549.50px;width:800px;text-align:center;">Approver Task</div><div style="position:absolute;top:969.31px;font-size:14.4px;line-height:14.4px;font-weight:700;color:#ffffff;white-space:nowrap;left:1549.50px;width:800px;text-align:center;">Completion %</div><div style="position:absolute;left:1492px;top:992px;width:238px;height:30.0px;background:#ffffff;"></div><div style="position:absolute;left:1730px;top:992px;width:292px;height:30.0px;background:#f5f6fa;"></div><div style="position:absolute;left:1492px;top:1021.0px;width:530px;height:1px;background:#e6e9ef;"></div><div style="position:absolute;left:1875.5px;top:992px;width:1px;height:30.0px;background:#eceff4;"></div><div style="position:absolute;top:1001.24px;font-size:14.6px;line-height:14.6px;font-weight:700;color:#3e4a6e;white-space:nowrap;left:1496.8px;">All Planning Entity</div><div style="position:absolute;left:1736.8px;top:1004.0px;width:28.9px;height:7.6px;border-radius:4px;background:#9aa862"></div><div style="position:absolute;left:1882.6px;top:1004.0px;width:20.8px;height:7.6px;border-radius:4px;background:#c7ad5d"></div><div style="position:absolute;top:999.71px;font-size:14.4px;line-height:14.4px;font-weight:400;color:#1f2640;white-space:nowrap;letter-spacing:0.3px;right:178.20px;margin-right:-0.3px;">57%</div><div style="position:absolute;top:999.71px;font-size:14.4px;line-height:14.4px;font-weight:400;color:#1f2640;white-space:nowrap;letter-spacing:0.3px;right:31.50px;margin-right:-0.3px;">35%</div><div style="position:absolute;left:1492px;top:1022.0px;width:238px;height:28.5px;background:#ffffff;"></div><div style="position:absolute;left:1730px;top:1022.0px;width:292px;height:28.5px;background:#f5f6fa;"></div><div style="position:absolute;left:1492px;top:1049.5px;width:530px;height:1px;background:#e6e9ef;"></div><div style="position:absolute;left:1875.5px;top:1022.0px;width:1px;height:28.5px;background:#eceff4;"></div><div style="position:absolute;top:1029.74px;font-size:14.6px;line-height:14.6px;font-weight:700;color:#3e4a6e;white-space:nowrap;left:1514.8px;">Elecar Corp Total</div><div style="position:absolute;left:1736.8px;top:1032.5px;width:28.9px;height:7.6px;border-radius:4px;background:#9aa862"></div><div style="position:absolute;left:1882.6px;top:1032.5px;width:20.8px;height:7.6px;border-radius:4px;background:#c7ad5d"></div><div style="position:absolute;top:1028.21px;font-size:14.4px;line-height:14.4px;font-weight:400;color:#1f2640;white-space:nowrap;letter-spacing:0.3px;right:178.20px;margin-right:-0.3px;">57%</div><div style="position:absolute;top:1028.21px;font-size:14.4px;line-height:14.4px;font-weight:400;color:#1f2640;white-space:nowrap;letter-spacing:0.3px;right:31.50px;margin-right:-0.3px;">35%</div><div style="position:absolute;left:1492px;top:1050.5px;width:238px;height:28.5px;background:#ffffff;"></div><div style="position:absolute;left:1730px;top:1050.5px;width:292px;height:28.5px;background:#f5f6fa;"></div><div style="position:absolute;left:1492px;top:1078.0px;width:530px;height:1px;background:#dde2ea;"></div><div style="position:absolute;left:1875.5px;top:1050.5px;width:1px;height:28.5px;background:#eceff4;"></div><div style="position:absolute;top:1058.24px;font-size:14.6px;line-height:14.6px;font-weight:700;color:#3e4a6e;white-space:nowrap;left:1537.8px;">Elecar USA</div><div style="position:absolute;left:1736.8px;top:1061.0px;width:20.1px;height:7.6px;border-radius:4px;background:#c9ad5d"></div><div style="position:absolute;left:1882.6px;top:1061.0px;width:20.1px;height:7.6px;border-radius:4px;background:#c9ad5d"></div><div style="position:absolute;top:1056.71px;font-size:14.4px;line-height:14.4px;font-weight:400;color:#1f2640;white-space:nowrap;letter-spacing:0.3px;right:178.20px;margin-right:-0.3px;">33%</div><div style="position:absolute;top:1056.71px;font-size:14.4px;line-height:14.4px;font-weight:400;color:#1f2640;white-space:nowrap;letter-spacing:0.3px;right:31.50px;margin-right:-0.3px;">33%</div><div style="position:absolute;left:1492px;top:1079.0px;width:238px;height:28.5px;background:#ffffff;"></div><div style="position:absolute;left:1730px;top:1079.0px;width:292px;height:28.5px;background:#f5f6fa;"></div><div style="position:absolute;left:1492px;top:1106.5px;width:530px;height:1px;background:#e6e9ef;"></div><div style="position:absolute;left:1875.5px;top:1079.0px;width:1px;height:28.5px;background:#eceff4;"></div><div style="position:absolute;top:1086.74px;font-size:14.6px;line-height:14.6px;font-weight:700;color:#3e4a6e;white-space:nowrap;left:1537.8px;">Elecar Canada</div><div style="position:absolute;left:1736.8px;top:1089.5px;width:26.4px;height:7.6px;border-radius:4px;background:#a4a863"></div><div style="position:absolute;left:1882.6px;top:1089.5px;width:26.4px;height:7.6px;border-radius:4px;background:#a4a863"></div><div style="position:absolute;top:1085.21px;font-size:14.4px;line-height:14.4px;font-weight:400;color:#1f2640;white-space:nowrap;letter-spacing:0.3px;right:178.20px;margin-right:-0.3px;">50%</div><div style="position:absolute;top:1085.21px;font-size:14.4px;line-height:14.4px;font-weight:400;color:#1f2640;white-space:nowrap;letter-spacing:0.3px;right:31.50px;margin-right:-0.3px;">50%</div><div style="position:absolute;left:1492px;top:1107.5px;width:238px;height:28.5px;background:#ffffff;"></div><div style="position:absolute;left:1730px;top:1107.5px;width:292px;height:28.5px;background:#f5f6fa;"></div><div style="position:absolute;left:1492px;top:1135.0px;width:530px;height:1px;background:#e6e9ef;"></div><div style="position:absolute;left:1875.5px;top:1107.5px;width:1px;height:28.5px;background:#eceff4;"></div><div style="position:absolute;top:1115.24px;font-size:14.6px;line-height:14.6px;font-weight:700;color:#3e4a6e;white-space:nowrap;left:1537.8px;">Elecar LATAM</div><div style="position:absolute;left:1736.8px;top:1118.0px;width:35.5px;height:7.6px;border-radius:4px;background:#78a05f"></div><div style="position:absolute;left:1882.6px;top:1118.0px;width:17.2px;height:7.6px;border-radius:4px;background:#d6ae5a"></div><div style="position:absolute;top:1113.71px;font-size:14.4px;line-height:14.4px;font-weight:400;color:#1f2640;white-space:nowrap;letter-spacing:0.3px;right:178.20px;margin-right:-0.3px;">75%</div><div style="position:absolute;top:1113.71px;font-size:14.4px;line-height:14.4px;font-weight:400;color:#1f2640;white-space:nowrap;letter-spacing:0.3px;right:31.50px;margin-right:-0.3px;">25%</div><div style="position:absolute;left:1492px;top:1136.0px;width:238px;height:30px;background:#ffffff;"></div><div style="position:absolute;left:1730px;top:1136.0px;width:292px;height:30px;background:#f5f6fa;"></div><div style="position:absolute;left:1875.5px;top:1136.0px;width:1px;height:30px;background:#eceff4;"></div></body></html>
